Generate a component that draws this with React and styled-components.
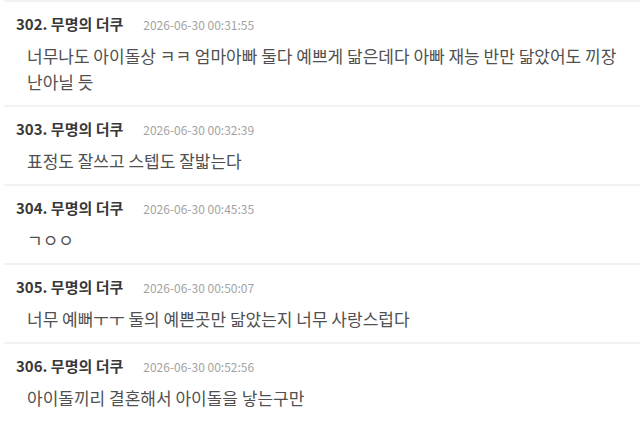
import React from "react";
import styled, { createGlobalStyle } from "styled-components";

const GlobalStyle = createGlobalStyle`
  body {
    margin: 0;
    background: #fff;
    font-family: "Noto Sans CJK KR", "Noto Sans", sans-serif;
  }
`;

const comments = [
  {
    no: 302,
    time: "2026-06-30 00:31:55",
    text: "너무나도 아이돌상 ㅋㅋ 엄마아빠 둘다 예쁘게 닮은데다 아빠 재능 반만 닮았어도 끼장난아닐 듯"
  },
  { no: 303, time: "2026-06-30 00:32:39", text: "표정도 잘쓰고 스텝도 잘밟는다" },
  { no: 304, time: "2026-06-30 00:45:35", text: "ㄱㅇㅇ" },
  {
    no: 305,
    time: "2026-06-30 00:50:07",
    text: "너무 예뻐ㅜㅜ 둘의 예쁜곳만 닮았는지 너무 사랑스럽다"
  },
  { no: 306, time: "2026-06-30 00:52:56", text: "아이돌끼리 결혼해서 아이돌을 낳는구만" }
];

const List = styled.ul`
  list-style: none;
  margin: 0;
  padding: 0 0 0 4px;
`;

const Item = styled.li`
  border-top: 2px solid #f2f2f2;
  padding: 11px 0 10px 12px;
`;

const Header = styled.div`
  display: flex;
  align-items: baseline;
  gap: 20px;
  height: 21px;
  line-height: 21px;
`;

const Author = styled.strong`
  font-size: 15px;
  font-weight: 700;
  color: #383838;
`;

const Time = styled.span`
  font-size: 12px;
  color: #a3a3a3;
`;

const Body = styled.p`
  margin: 9px 0 0;
  padding: 0 12px 0 11px;
  font-size: 17px;
  line-height: 26px;
  color: #505050;
  word-break: break-all;
`;

export default function App() {
  return (
    <>
      <GlobalStyle />
      <List>
        {comments.map(c => (
          <Item key={c.no}>
            <Header>
              <Author>{c.no}. 무명의 더쿠</Author>
              <Time>{c.time}</Time>
            </Header>
            <Body>{c.text}</Body>
          </Item>
        ))}
      </List>
    </>
  );
}
